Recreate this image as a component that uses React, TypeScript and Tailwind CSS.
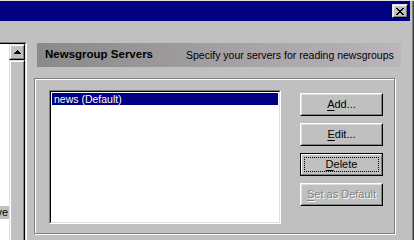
import React from "react";

const raised =
  "border border-t-white border-l-white border-r-black border-b-black";
const raisedInner =
  "border border-t-[#dfdfdf] border-l-[#dfdfdf] border-r-[#808080] border-b-[#808080]";

function Btn({
  children,
  focused,
  disabled,
}: {
  children: React.ReactNode;
  focused?: boolean;
  disabled?: boolean;
}) {
  if (focused) {
    return (
      <div className="w-[83px] h-[23px] border border-black flex">
        <div className="flex-1 border border-t-white border-l-white border-r-[#808080] border-b-[#808080] flex p-[2px]">
          <div className="flex-1 border border-dotted border-black flex items-center justify-center text-black">
            {children}
          </div>
        </div>
      </div>
    );
  }
  return (
    <div className={`w-[83px] h-[23px] flex ${raised}`}>
      <div
        className={`flex-1 flex items-center justify-center ${raisedInner} ${
          disabled ? "text-[#808080] [text-shadow:1px_1px_0_#fff]" : "text-black"
        }`}
      >
        {children}
      </div>
    </div>
  );
}

function U({ children }: { children: React.ReactNode }) {
  return <span className="underline underline-offset-[2px] decoration-1">{children}</span>;
}

export default function App() {
  return (
    <div
      className="w-[414px] h-[240px] overflow-hidden bg-[#c0c0c0] flex flex-col text-[11px] leading-none"
      style={{ fontFamily: '"Liberation Sans", Arial, sans-serif' }}
    >
      <div className="h-px bg-[#dfdfdf] shrink-0" />
      <div className="flex flex-1 min-h-0">
        <div className="w-[410px] flex flex-col">
          {/* title bar */}
          <div className="h-[20px] bg-[#000080] flex justify-end items-start pr-[2px] pt-[3px] shrink-0">
            <div className="w-[16px] h-[14px] flex border border-t-[#dfdfdf] border-l-[#dfdfdf] border-r-black border-b-black">
              <div className="flex-1 bg-[#c0c0c0] border border-t-white border-l-white border-r-[#808080] border-b-[#808080] flex items-start justify-start pl-[2px] pt-[2px]">
                <svg width="8" height="7" viewBox="0 0 8 7" shapeRendering="crispEdges">
                  <path
                    d="M0 0h2v1H0zM6 0h2v1H6zM1 1h2v1H1zM5 1h2v1H5zM2 2h4v1H2zM3 3h2v1H3zM2 4h4v1H2zM1 5h2v1H1zM5 5h2v1H5zM0 6h2v1H0zM6 6h2v1H6z"
                    fill="#000"
                  />
                </svg>
              </div>
            </div>
          </div>

          {/* body */}
          <div className="flex items-start flex-1">
            {/* left list (cropped) */}
            <div className="mt-[21px] w-[27px] h-[220px] border-t border-r border-t-[#808080] border-r-white flex">
              <div className="flex-1 border-t border-r border-t-black border-r-[#dfdfdf] flex">
                <div className="w-[9px] bg-white flex flex-col overflow-hidden">
                  <div className="mt-[162px] h-[13px] bg-[#c0c0c0] flex items-center justify-end overflow-hidden whitespace-nowrap text-black">
                    <span className="pr-[1px]">ve</span>
                  </div>
                </div>
                <div className="w-[16px] flex flex-col">
                  <div className="h-[16px] flex border border-t-[#dfdfdf] border-l-[#dfdfdf] border-r-black border-b-black">
                    <div className="flex-1 border border-t-white border-l-white border-r-[#808080] border-b-[#808080] flex items-center justify-center">
                      <svg width="7" height="4" viewBox="0 0 7 4" shapeRendering="crispEdges">
                        <path d="M3 0h1v1H3zM2 1h3v1H2zM1 2h5v1H1zM0 3h7v1H0z" fill="#000" />
                      </svg>
                    </div>
                  </div>
                  <div className="flex-1 flex border border-t-[#dfdfdf] border-l-[#dfdfdf] border-r-black border-b-black">
                    <div className="flex-1 border border-t-white border-l-white border-r-[#808080] border-b-[#808080]" />
                  </div>
                </div>
              </div>
            </div>

            {/* right panel */}
            <div className="ml-[7px] flex flex-col">
              <div className="mt-[22px] ml-[3px] w-[364px] h-[24px] bg-linear-to-r from-[#8a8a8a] to-[#bcb5bc] flex items-center">
                <div className="w-[149px] pl-[8px] font-bold text-[11.5px] text-black">
                  Newsgroup Servers
                </div>
                <div className="text-black whitespace-nowrap text-[10.5px]">
                  Specify your servers for reading newsgroups
                </div>
              </div>

              <div className="mt-[11px] w-[361px] h-[156px] border border-[#808080] shadow-[inset_1px_1px_0_#fff,1px_1px_0_#fff] flex items-start pl-[14px] pt-[11px]">
                {/* list box */}
                <div className="w-[232px] h-[134px] border border-t-[#808080] border-l-[#808080] border-r-white border-b-white flex">
                  <div className="flex-1 border border-t-black border-l-black border-r-[#dfdfdf] border-b-[#dfdfdf] bg-white p-[1px]">
                    <div className="h-[12px] bg-[#000080] text-white flex items-center pl-[2px] text-[10.5px]">
                      news (Default)
                    </div>
                  </div>
                </div>

                {/* buttons */}
                <div className="ml-[19px] mt-[3px] flex flex-col gap-[7px]">
                  <Btn>
                    <span>
                      <U>A</U>dd...
                    </span>
                  </Btn>
                  <Btn>
                    <span>
                      <U>E</U>dit...
                    </span>
                  </Btn>
                  <Btn focused>
                    <span>
                      <U>D</U>elete
                    </span>
                  </Btn>
                  <Btn disabled>
                    <span>
                      <U>S</U>et as Default
                    </span>
                  </Btn>
                </div>
              </div>
            </div>
          </div>
        </div>
        {/* right frame */}
        <div className="w-[2px] bg-[#c0c0c0]" />
        <div className="w-px bg-[#808080]" />
        <div className="w-px bg-[#404040]" />
      </div>
    </div>
  );
}
